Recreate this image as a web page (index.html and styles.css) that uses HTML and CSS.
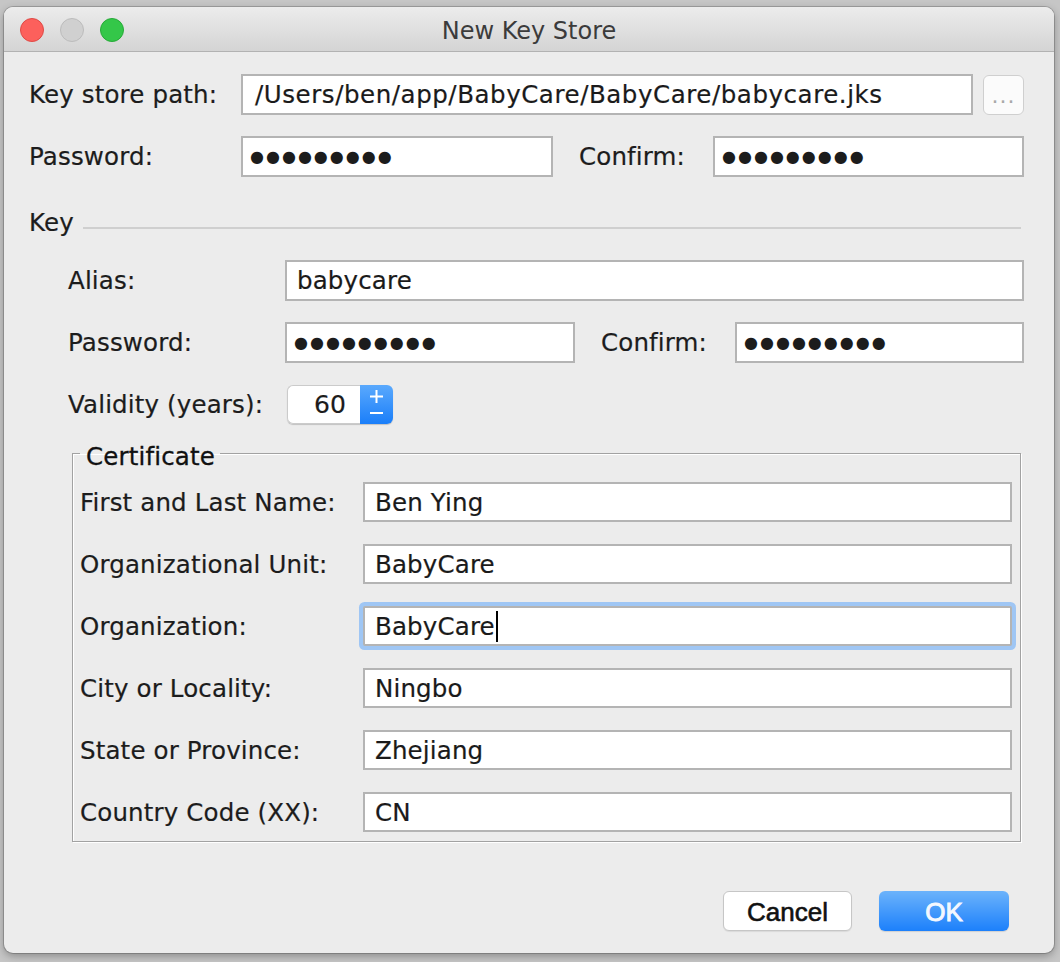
FILE: index.html
```html
<!DOCTYPE html>
<html>
<head>
<meta charset="utf-8">
<title>New Key Store</title>
<link rel="stylesheet" href="styles.css">
</head>
<body>
<div class="window">
  <header class="titlebar">
    <div class="lights">
      <span class="light close"></span>
      <span class="light min"></span>
      <span class="light max"></span>
    </div>
    <div class="title">New Key Store</div>
    <div class="spacer"></div>
  </header>
  <main class="content">
    <div class="row row-path">
      <span class="lbl">Key store path:</span>
      <div class="field path">/Users/ben/app/BabyCare/BabyCare/babycare.jks</div>
      <span class="browse">...</span>
    </div>
    <div class="row row-pair top-pair">
      <span class="lbl">Password:</span>
      <div class="field pw">●●●●●●●●●</div>
      <span class="lbl lbl-confirm">Confirm:</span>
      <div class="field pw">●●●●●●●●●</div>
    </div>
    <div class="sep"><span class="sep-text">Key</span><i class="sep-line"></i></div>
    <section class="key">
      <div class="row row-alias">
        <span class="lbl">Alias:</span>
        <div class="field">babycare</div>
      </div>
      <div class="row row-pair key-pair">
        <span class="lbl">Password:</span>
        <div class="field pw">●●●●●●●●●</div>
        <span class="lbl lbl-confirm">Confirm:</span>
        <div class="field pw">●●●●●●●●●</div>
      </div>
      <div class="row row-validity">
        <span class="lbl">Validity (years):</span>
        <div class="spinner">
          <div class="spin-value">60</div>
          <div class="spin-btns">
            <svg width="33" height="39" viewBox="0 0 33 39">
              <path d="M10 11.5 H23 M16.5 5 V18" stroke="#fff" stroke-width="2" fill="none"/>
              <path d="M10 28 H23" stroke="#fff" stroke-width="2" fill="none"/>
            </svg>
          </div>
        </div>
      </div>
      <fieldset class="cert">
        <legend>Certificate</legend>
        <div class="cert-row"><span class="lbl">First and Last Name:</span><div class="field cfield">Ben Ying</div></div>
        <div class="cert-row"><span class="lbl">Organizational Unit:</span><div class="field cfield">BabyCare</div></div>
        <div class="cert-row"><span class="lbl">Organization:</span><div class="field cfield focused">BabyCare<span class="caret"></span></div></div>
        <div class="cert-row"><span class="lbl">City or Locality:</span><div class="field cfield">Ningbo</div></div>
        <div class="cert-row"><span class="lbl">State or Province:</span><div class="field cfield">Zhejiang</div></div>
        <div class="cert-row"><span class="lbl">Country Code (XX):</span><div class="field cfield">CN</div></div>
      </fieldset>
    </section>
    <div class="actions">
      <span class="btn cancel">Cancel</span>
      <span class="btn ok">OK</span>
    </div>
  </main>
</div>
</body>
</html>
```

FILE: styles.css
```css
html, body {
  margin: 0;
  padding: 0;
  overflow: hidden;
}
body {
  width: 1060px;
  height: 962px;
  background: #c6c6c6;
  font-family: "DejaVu Sans", "Noto Sans", sans-serif;
  font-size: 24.5px;
  letter-spacing: 0.15px;
  color: #1c1c1c;
}
.window {
  margin: 7px 0 0 4px;
  width: 1050px;
  height: 946px;
  border-radius: 9px;
  overflow: hidden;
  background: #ececec;
  box-shadow: 0 0 0 1px rgba(0,0,0,0.18), 0 3px 8px rgba(0,0,0,0.3);
}
.titlebar {
  height: 42px;
  padding-top: 2px;
  border-bottom: 1px solid #b2b2b2;
  background: linear-gradient(#ececec, #d4d4d4);
  display: grid;
  grid-template-columns: 1fr auto 1fr;
  align-items: center;
}
.lights {
  display: flex;
  gap: 16px;
  padding-left: 16px;
}
.light {
  width: 22px;
  height: 22px;
  border-radius: 50%;
  border: 1px solid transparent;
}
.light.close { background: #fc605c; border-color: #df4a46; }
.light.min { background: #d0d0d0; border-color: #bcbcbc; }
.light.max { background: #34c749; border-color: #27aa38; }
.title {
  color: #3b3b3b;
  font-size: 24px;
  letter-spacing: 0;
  padding-top: 1px;
}
.content {
  padding: 21px 30px 0 25px;
}
.row {
  display: grid;
  align-items: center;
}
.lbl {
  white-space: nowrap;
  -webkit-text-stroke: 0.2px #1c1c1c;
}
.field {
  height: 41px;
  box-sizing: border-box;
  border: 2px solid #b4b4b4;
  background: #fff;
  display: flex;
  align-items: center;
  padding: 0 10px 0 10px;
  white-space: nowrap;
  color: #1a1a1a;
  -webkit-text-stroke: 0.2px #1a1a1a;
}
.field.path {
  padding-left: 12px;
  letter-spacing: 0.55px;
}
.field.pw {
  padding-left: 7px;
  font-size: 16px;
  letter-spacing: 2px;
  color: #1c1c1c;
  -webkit-text-stroke: 0;
}
.row-path {
  grid-template-columns: 212px 732px 1fr;
}
.browse {
  margin: 2px 0 0 10px;
  height: 40px;
  box-sizing: border-box;
  border: 1px solid #cfcfcf;
  border-radius: 6px;
  background: #fbfbfb;
  color: #a9a9a9;
  font-size: 22px;
  letter-spacing: 1px;
  display: flex;
  align-items: flex-end;
  justify-content: center;
  padding-bottom: 7px;
  line-height: 1;
}
.top-pair {
  margin-top: 21px;
  grid-template-columns: 212px 312px 160px 311px;
}
.lbl-confirm {
  padding-left: 26px;
}
.sep {
  margin-top: 31px;
  display: flex;
  align-items: center;
  height: 28px;
}
.sep-text {
  -webkit-text-stroke: 0.2px #1c1c1c;
}
.sep-line {
  flex: 1;
  height: 2px;
  background: #cfcfcf;
  margin: 12px 3px 0 9px;
}
.key {
  padding-left: 39px;
}
.row-alias {
  margin-top: 24px;
  grid-template-columns: 217px 1fr;
}
.key-pair {
  margin-top: 21px;
  grid-template-columns: 217px 290px 160px 1fr;
}
.row-validity {
  margin-top: 22px;
  grid-template-columns: 219px 106px;
}
.spinner {
  display: flex;
  height: 39px;
  border-radius: 6px;
  box-shadow: 0 1px 1px rgba(0,0,0,0.18);
}
.spin-value {
  width: 73px;
  box-sizing: border-box;
  border: 1px solid #cbcbcb;
  border-right: none;
  border-radius: 6px 0 0 6px;
  background: #fff;
  text-align: right;
  padding-right: 14px;
  line-height: 37px;
  font-size: 25px;
  -webkit-text-stroke: 0.2px #1a1a1a;
}
.spin-btns {
  width: 33px;
  border-radius: 0 6px 6px 0;
  background: linear-gradient(#5aa9fd, #1a7ef9);
  display: flex;
}
.cert {
  margin: 11px 3px 0 4px;
  padding: 11px 8px 9px 7px;
  border: 1px solid #a2a2a2;
  box-shadow: 1px 1px 0 #fff, inset 1px 1px 0 #fff;
  display: flex;
  flex-direction: column;
  gap: 22px;
  min-width: 0;
}
.cert legend {
  padding: 8px 5px 0 6px;
  font-size: 24.5px;
  line-height: 28px;
  color: #111;
  -webkit-text-stroke: 0.3px #111;
}
.cert-row {
  display: grid;
  grid-template-columns: 283px 1fr;
  align-items: center;
}
.cfield {
  height: 40px;
}
.focused {
  border-radius: 2px;
  box-shadow: 0 0 0 4px #9fc6f4;
}
.caret {
  display: inline-block;
  width: 2px;
  height: 31px;
  background: #000;
  margin-left: 1px;
}
.actions {
  margin-top: 49px;
  display: flex;
  justify-content: flex-end;
  gap: 27px;
  padding-right: 15px;
}
.btn {
  width: 130px;
  height: 40px;
  box-sizing: border-box;
  border-radius: 6px;
  display: flex;
  align-items: center;
  justify-content: center;
  font-family: "Liberation Sans", Arial, sans-serif;
  font-size: 26px;
  letter-spacing: 0;
  padding-top: 2px;
}
.btn.cancel {
  width: 129px;
  background: #fff;
  border: 1px solid #c6c6c6;
  box-shadow: 0 1px 1px rgba(0,0,0,0.08);
  color: #111;
  -webkit-text-stroke: 0.6px #111;
}
.btn.ok {
  background: linear-gradient(#6cb3fb, #1c80fb);
  color: #f4f8ff;
  -webkit-text-stroke: 0.9px #f4f8ff;
  box-shadow: 0 1px 1px rgba(0,0,0,0.12);
}
```
